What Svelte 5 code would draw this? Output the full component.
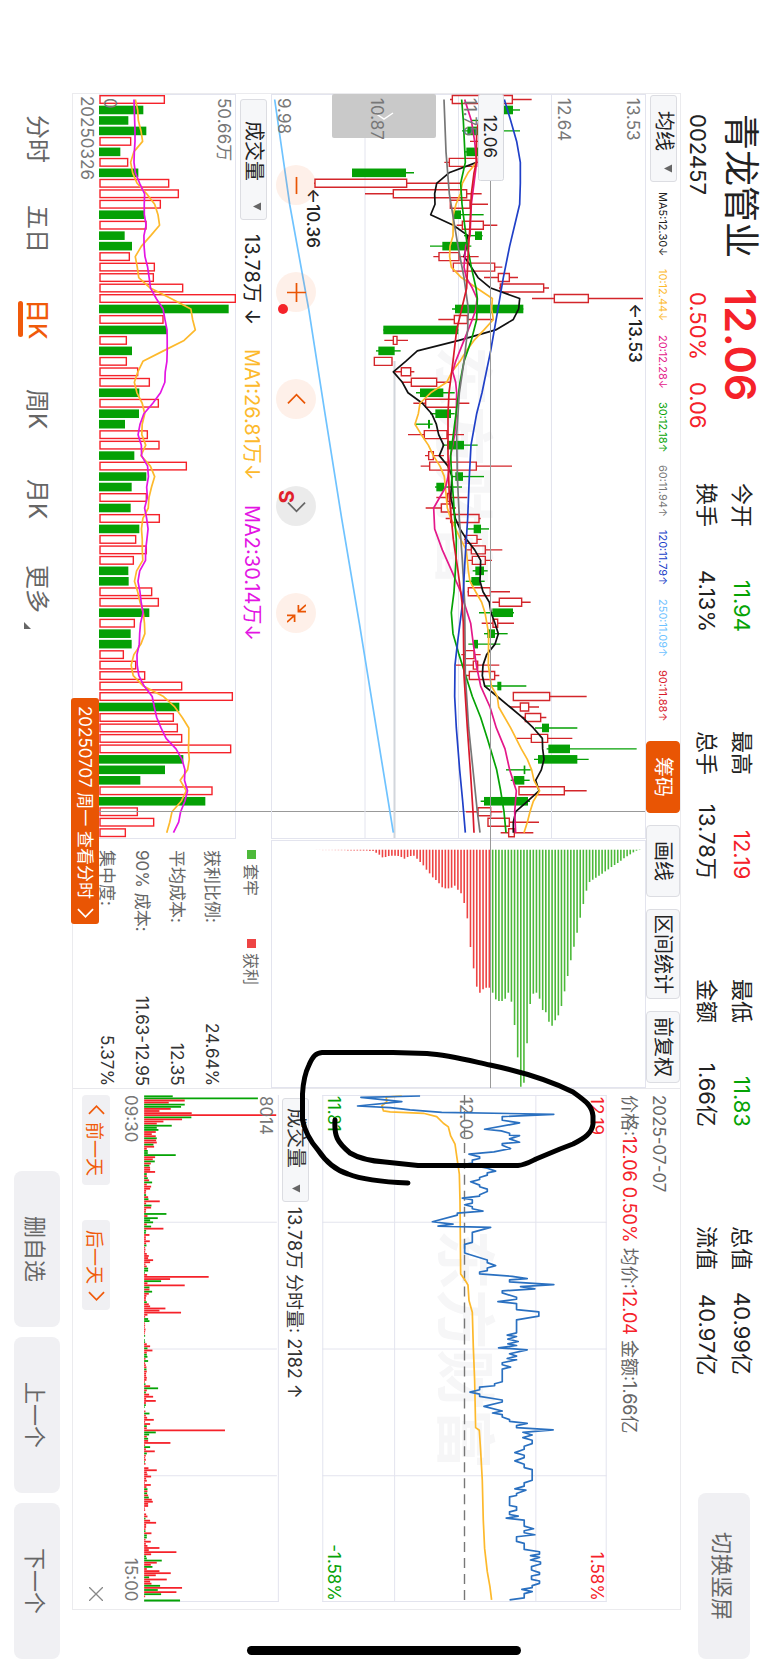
<script lang="ts">
  // Landscape K-line screen. The whole page runs in vertical-rl, so the inline axis
  // goes top to bottom and the block axis goes right to left.

  type Candle = [low: number, from: number, to: number, high: number, up: 0 | 1];
  type Point = [number, number];

  const STEP = 10.474;
  const slot = (i: number) => 5.5 + i * STEP;
  // plot units are thirds of a pixel
  const kx = (v: number) => 113 + v / 3;

  const candles: Candle[] = [
    [198, 205, 385, 443, 1], [320, 335, 387, 408, 0], [264, 282, 300, 320, 0], [234, 250, 300, 408, 0],
    [258, 285, 320, 340, 1], [240, 247, 282, 300, 0], [181, 196, 278, 300, 1], [-96, -96, 66, 90, 0],
    [-210, -207, 68, 230, 1], [-57, 28, 248, 293, 1], [199, 199, 258, 312, 1], [205, 209, 231, 299, 0],
    [218, 235, 298, 340, 1], [240, 273, 294, 296, 0], [138, 175, 248, 262, 0], [148, 165, 225, 284, 1],
    [208, 208, 332, 355, 1], [300, 343, 376, 402, 1], [345, 349, 479, 495, 1], [444, 511, 613, 777, 1],
    [204, 213, 418, 418, 0], [163, 211, 250, 330, 1], [-2, -2, 223, 223, 0], [1, 28, 39, 72, 1],
    [-24, -17, 32, 50, 0], [-29, -29, 24, 24, 1], [33, 52, 80, 91, 1], [53, 82, 158, 198, 1],
    [96, 108, 178, 212, 0], [88, 125, 218, 256, 1], [138, 154, 201, 212, 0], [93, 132, 138, 146, 0],
    [72, 121, 189, 240, 1], [175, 189, 240, 281, 0], [123, 134, 148, 180, 1], [110, 137, 277, 384, 1],
    [205, 214, 237, 300, 0], [153, 157, 180, 234, 0], [157, 190, 200, 250, 1], [125, 172, 200, 216, 1],
    [185, 200, 285, 290, 1], [250, 269, 291, 315, 0], [240, 244, 279, 293, 1], [244, 262, 304, 355, 1],
    [252, 265, 304, 324, 1], [266, 274, 300, 311, 0], [245, 262, 288, 302, 0], [250, 253, 319, 378, 1],
    [325, 346, 413, 440, 1], [285, 325, 387, 390, 0], [293, 327, 341, 390, 1], [300, 310, 333, 371, 0],
    [253, 269, 282, 349, 0], [232, 244, 270, 290, 1], [216, 268, 281, 346, 1], [246, 256, 332, 346, 1],
    [300, 340, 352, 427, 0], [388, 388, 497, 608, 1], [377, 409, 434, 465, 1], [413, 424, 470, 487, 1],
    [453, 474, 495, 580, 0], [397, 442, 491, 565, 1], [488, 493, 558, 758, 0], [450, 462, 580, 614, 0],
    [366, 419, 424, 440, 0], [380, 389, 421, 437, 0], [403, 405, 541, 608, 1], [290, 300, 432, 438, 0],
    [246, 282, 320, 355, 1], [312, 312, 376, 465, 1], [350, 374, 391, 448, 1],
  ];

  const averages: { color: string; points: Point[] }[] = [
    { color: '#6fc3ff', points: [[0, -328], [10, -283], [20, -226], [30, -177], [40, -127], [50, -74], [61, -18], [70, 28]] },
    { color: '#111', points: [[6, 278], [7, 195], [8, 158], [9, 152], [10, 153], [11, 140], [12, 208], [13, 252], [14, 248], [15, 240], [16, 262], [17, 282], [18, 320], [19, 407], [20, 404], [21, 388], [22, 335], [23, 225], [24, 100], [25, 65], [26, 28], [27, 55], [28, 72], [29, 115], [30, 143], [31, 157], [32, 164], [33, 179], [34, 166], [35, 192], [36, 204], [38, 200], [39, 208], [40, 214], [41, 228], [42, 248], [43, 272], [44, 290], [46, 288], [47, 297], [48, 316], [49, 321], [50, 333], [51, 343], [52, 333], [53, 308], [54, 297], [55, 295], [56, 302], [57, 340], [58, 378], [59, 415], [60, 448], [61, 475], [62, 476], [63, 480], [64, 472], [65, 455], [66, 465], [67, 430], [68, 395], [69, 388], [70, 388]] },
    { color: '#fdb92c', points: [[6, 278], [7, 252], [8, 235], [9, 229], [10, 216], [11, 208], [13, 207], [14, 198], [15, 197], [16, 202], [17, 232], [18, 278], [19, 325], [20, 323], [21, 328], [22, 300], [23, 270], [24, 247], [25, 228], [26, 204], [27, 188], [28, 140], [29, 108], [30, 103], [31, 93], [32, 112], [33, 133], [34, 148], [35, 168], [36, 181], [37, 184], [39, 190], [40, 200], [41, 215], [42, 230], [43, 247], [45, 253], [46, 258], [47, 275], [48, 293], [49, 303], [51, 314], [54, 313], [56, 322], [57, 340], [58, 344], [60, 380], [61, 396], [62, 412], [63, 430], [64, 443], [65, 450], [66, 467], [67, 448], [68, 438], [69, 430], [70, 420]] },
    { color: '#e4188a', points: [[0, 242], [2, 262], [4, 272], [6, 278], [8, 270], [10, 262], [13, 258], [14, 245], [16, 240], [17, 247], [18, 265], [19, 279], [20, 276], [21, 265], [23, 240], [25, 215], [26, 206], [27, 215], [28, 218], [30, 217], [32, 212], [34, 200], [36, 192], [37, 185], [38, 167], [39, 149], [41, 152], [43, 175], [45, 203], [47, 230], [48, 240], [50, 260], [52, 268], [54, 277], [56, 290], [58, 318], [60, 337], [62, 363], [64, 377], [66, 397], [68, 392], [70, 395]] },
    { color: '#05a305', points: [[0, 233], [2, 238], [6, 244], [8, 230], [10, 234], [12, 242], [14, 250], [16, 262], [18, 276], [19, 280], [21, 278], [23, 262], [25, 240], [27, 228], [30, 216], [32, 208], [34, 200], [36, 203], [38, 208], [40, 212], [42, 217], [44, 216], [47, 210], [49, 202], [51, 207], [53, 225], [55, 245], [57, 265], [59, 290], [61, 310], [64, 338], [66, 350], [68, 360], [70, 366]] },
    { color: '#777', points: [[0, 180], [5, 186], [9, 196], [14, 222], [17, 240], [20, 253], [22, 251], [25, 240], [28, 226], [32, 218], [36, 220], [40, 226], [44, 235], [48, 242], [55, 244], [60, 254], [64, 267], [68, 280], [70, 288]] },
    { color: '#2040c8', points: [[0, 361], [2, 380], [4, 398], [6, 409], [8, 409], [10, 407], [12, 392], [14, 377], [17, 358], [20, 342], [24, 320], [28, 294], [30, 278], [33, 261], [36, 256], [40, 251], [44, 243], [48, 236], [52, 220], [54, 213], [57, 212], [60, 217], [64, 227], [67, 236], [70, 244]] },
    { color: '#d8192b', points: [[0, 300], [3, 278], [6, 277], [7, 270], [9, 262], [12, 258], [15, 252], [18, 248], [22, 218], [25, 207], [28, 195], [30, 192], [34, 192], [38, 196], [42, 208], [45, 222], [48, 234], [50, 238], [55, 240], [60, 250], [64, 259], [68, 267], [70, 270]] },
  ];

  // daily volume, negative = falling day
  const volumes = [
    196, -133, -88, -142, 95, -64, 86, -118, 209, 238, 184, -136, 141, -77, -99, 91, 166, 163, 251, 409, -389, 192,
    -204, 82, -99, 82, 116, 151, -121, 178, -120, -78, 145, 180, -106, 262, -142, -98, 142, -95, 181, -121, 110, 142,
    103, -88, -89, 158, 178, -151, 106, -95, -98, 73, 110, 137, 248, 400, -241, 223, 235, 248, 395, -253, -198, -124,
    339, -319, 115, 164, 79,
  ];

  function movingAverage(size: number, lead: number[]) {
    return volumes.map((_, i) => {
      if (i < lead.length) return lead[i];
      const part = volumes.slice(i - size + 1, i + 1);
      return part.reduce((sum, v) => sum + Math.abs(v), 0) / size;
    });
  }
  const volumeLine = (values: number[]) => values.map((v, i) => `${v / 3},${slot(i)}`).join(' ');
  const ma5 = volumeLine(movingAverage(5, [109, 116, 118, 126]));
  const ma10 = volumeLine(movingAverage(10, [105, 106, 107, 108, 108, 106, 105, 109, 122]));

  const chipsLoss = [
    818, 838, 843, 843, 836, 818, 845, 915, 1012, 1100, 1088, 970, 852, 821, 818, 836, 870, 877, 905, 917, 901, 886,
    858, 814, 768, 721, 680, 638, 593, 552, 512, 486, 479, 473, 467, 461, 454, 448, 441, 435, 429, 422, 415, 409, 403,
    397, 392, 390,
  ];
  const chipsGain = [
    803, 803, 808, 818, 800, 745, 681, 595, 549, 520, 509, 497, 503, 505, 505, 502, 490, 480, 472, 460, 449, 436, 426,
    416, 407, 408, 411, 416, 411, 408, 407, 407, 408, 411, 412, 404, 398, 393, 393, 392, 392, 392, 392, 392, 392, 392,
    391, 391, 391, 391, 391, 391, 391, 391, 390, 390,
  ];

  const priceLine =
    '108,45 -70,49 53,62 -80,75 18,80 78,87 173,94 510,100 355,107 355,118 407,126 302,145 352,150 377,157 377,163 407,164 377,174 407,184 355,188 355,193 380,203 330,213 255,220 287,228 287,233 265,238 265,247 245,250 310,262 335,271 310,276 310,283 287,290 287,296 260,303 287,313 287,318 310,325 310,332 287,342 287,346 235,352 265,357 265,367 242,372 265,378 265,384 297,391 220,397 220,403 145,423 207,430 162,436 320,440 265,455 265,485 242,491 242,517 310,538 310,546 335,555 310,562 310,570 287,574 287,580 385,587 430,594 377,598 377,604 510,612 410,618 453,625 355,631 355,637 398,650 398,656 342,663 398,669 398,687 465,694 465,707 398,718 398,757 370,764 398,768 372,776 403,783 372,790 398,795 344,802 430,808 377,820 398,827 370,834 398,838 355,847 355,853 380,860 355,866 355,904 332,910 332,916 287,920 287,928 258,935 287,941 287,948 355,959 355,965 300,978 355,992 326,998 355,1003 355,1010 377,1018 377,1023 430,1029 398,1036 398,1042 508,1049 417,1056 445,1064 417,1072 445,1080 445,1090 421,1098 421,1107 393,1117 421,1125 421,1132 393,1142 421,1152 421,1162 445,1168 445,1200 421,1208 421,1218 393,1226 426,1230 398,1240 398,1246 377,1250 377,1276 398,1280 398,1290 377,1295 377,1303 403,1308 367,1314 421,1320 421,1338 449,1346 421,1352 421,1358 453,1364 398,1370 398,1384 421,1390 421,1408 467,1415 467,1422 440,1427 467,1432 440,1440 470,1446 470,1452 443,1460 443,1470 467,1478 467,1483 443,1488 443,1498 467,1503 467,1510 445,1517 445,1523 414,1528 445,1535 421,1541 421,1554 377,1560';
  const meanLine =
    '53,45 6,48 8,62 -7,75 -2,90 18,93 118,97 158,107 178,127 193,138 200,165 213,190 218,225 226,280 228,360 230,580 243,598 252,613 255,660 265,695 268,800 272,900 275,1042 286,1050 290,1110 295,1200 298,1320 302,1405 310,1475 318,1520 323,1560';

  // minute volume, negative = falling minute
  const minutes = [
    -86, -342, 122, 74, -122, -111, 80, 46, 143, 397, -142, 114, 58, 38, -83, -38, -43, 35, 23, 35, -38, 36, 38, -28,
    30, 8, -11, -11, -95, 33, 26, -32, 20, -16, 18, 18, 33, -8, 8, -11, 15, -24, 8, 21, 18, 6, 5, -6, 12, -13, 47, 6,
    -22, 21, 6, 5, -67, 10, -41, -18, -27, 8, -21, 58, -6, -5, 16, 5, 5, 17, 6, -7, 3, 4, 3, 8, 14, 12, 27, 18, 4, 8,
    -12, -12, -2, 9, 194, 78, -51, 10, 122, -16, 16, -24, 14, 7, 5, 5, -8, 14, 18, 64, 46, 111, 10, 3, -12, -16, 2, 3,
    2, 4, 3, 2, -3, 0, -2, -3, 8, 18, -10, 25, 8, -8, -10, 4, -12, 3, 5, 7, -7, 8, 6, 6, 8, 7, 2, -4, 18, -42, 8, -5,
    15, 27, 6, 35, 5, -5, -2, 0, 4, -16, 5, 9, 29, 3, 18, -8, 8, 243, -35, -15, 8, -12, 12, 79, 3, -18, 5, 32, -8, 5,
    3, 5, -2, 4, 0, 13, 38, 8, 10, 21, 6, 8, 2, 20, 7, -10, 10, -9, 12, -14, 23, 26, 12, 12, 2, 3, 0, 6, 10, -4, 18,
    36, 6, 6, 4, -4, 22, -8, -8, 4, 20, 5, 10, 46, 14, 97, 21, -6, -8, -53, 38, 20, -25, 8, 46, 80, 35, -15, 68, 18,
    22, -48, 114, -41, 97, -51, 3, 0, -108,
  ];

  const stats = [
    [['今开', '11.94', 'down'], ['换手', '4.13%', '']],
    [['最高', '12.19', 'up'], ['总手', '13.78万', '']],
    [['最低', '11.83', 'down'], ['金额', '1.66亿', '']],
    [['总值', '40.99亿', ''], ['流值', '40.97亿', '']],
  ];
  const maLegend = [
    ['MA5:12.30↓', '#222'], ['10:12.44↓', '#fdb92c'], ['20:12.28↓', '#e4188a'], ['30:12.18↑', '#05a305'],
    ['60:11.94↑', '#777'], ['120:11.79↑', '#2040c8'], ['250:11.09↑', '#6fc3ff'], ['90:11.88↑', '#d8192b'],
  ];
  const chipRows = [['获利比例:', '24.64%'], ['平均成本:', '12.35'], ['90% 成本:', '11.63-12.95'], ['集中度:', '5.37%']];
  const periods = ['分时', '五日', '日K', '周K', '月K', '更多'];

  let period = $state('日K');
  let panel = $state('筹码');
</script>

{#snippet label(x: number, y: number, text: string, kind = '')}
  <text class={kind} transform="translate({x} {y}) rotate(90)">{text}</text>
{/snippet}

{#snippet picker(name: string, value: string)}
  <label class="picker">
    <select aria-label={name}><option>{value}</option></select>
    <svg viewBox="0 0 8 8" aria-hidden="true"><path d="M0 4 8 0V8Z" /></svg>
  </label>
{/snippet}

<div class="screen">
  <header>
    <div class="quote">
      <h1>青龙管业</h1>
      <strong>12.06</strong>
      <span class="code">002457</span>
      <span class="change"><span>0.50%</span><span>0.06</span></span>
    </div>
    <div class="stats">
      {#each stats as pair}
        <dl>
          {#each pair as [name, value, kind]}
            <div><dt>{name}</dt><dd class={kind}>{value}</dd></div>
          {/each}
        </dl>
      {/each}
    </div>
    <button class="soft rotate" type="button">切换竖屏</button>
  </header>

  <main>
    <div class="toolbar">
      {@render picker('指标', '均线')}
      <div class="legend">
        {#each maLegend as [text, color]}<span style="color: {color}">{text}</span>{/each}
      </div>
      {#each ['筹码', '画线', '区间统计', '前复权'] as name}
        <button type="button" class="tool" class:active={panel === name} onclick={() => (panel = name)}>{name}</button>
      {/each}
    </div>

    <section class="kline">
      <svg viewBox="0 0 375 746" role="img" aria-label="日K线图">
        {@render label(170, 252, '东方财富', 'watermark')}
        <path class="grid" d="M94 0V744M187.5 0V744M280.5 0V744M0 .5H375M0 744.5H375M.5 0V744M374.5 0V744" />
        <path class="thick" d="M123.5 267V744" />
        <rect class="handle" x="61" y="0" width="104" height="44" rx="2" />
        <path class="chevron" d="M104 19 113 25 122 19" />
        {#each candles as [low, from, to, high, up], i}
          {#if up}
            <path class="rise" d="M{kx(low)} {slot(i)}H{kx(from)}M{kx(to)} {slot(i)}H{kx(high)}M{kx(from)} {slot(i) - 4}H{kx(to)}V{slot(i) + 4}H{kx(from)}Z" />
          {:else}
            <path class="fall" d="M{kx(low)} {slot(i)}H{kx(high)}" />
            <rect class="fall-body" x={kx(from)} y={slot(i) - 4.3} width={(to - from) / 3} height="8.6" />
          {/if}
        {/each}
        {#each averages as line}
          <polyline class="line" stroke={line.color} points={line.points.map(([i, v]) => `${kx(v)},${slot(i)}`).join(' ')} />
        {/each}
        <path class="cross" d="M219.5 0V746" />
        {@render label(356, 4, '13.53')}
        {@render label(287, 4, '12.64')}
        {@render label(193, 4, '11.75')}
        {@render label(100, 4, '10.87')}
        {@render label(7, 4, '9.98')}
        {@render label(358, 209, '←13.53', 'dark')}
        {@render label(36, 94, '←10.36', 'dark')}
        <rect class="tag" x="207.5" y=".5" width="25" height="86" rx="2" />
        {@render label(213, 21, '12.06', 'dark plain')}
        <circle cx="12" cy="215" r="5" fill="#f5222a" />
      </svg>
      <div class="controls">
        <button type="button" aria-label="缩小"><svg viewBox="0 0 20 20"><path d="M10 1V19" /></svg></button>
        <button type="button" aria-label="放大"><svg viewBox="0 0 20 20"><path d="M10 0V20M0 10H20" /></svg></button>
        <button type="button" aria-label="左移"><svg viewBox="0 0 20 20"><path d="M1 14 10 5 19 14" /></svg></button>
        <button type="button" aria-label="右移" class="off"><svg viewBox="0 0 20 20"><path d="M1 6 10 15 19 6" /></svg><b>S</b></button>
        <button type="button" aria-label="还原"><svg viewBox="0 0 20 20"><path d="M20 1 12 8M12 1V8H20M0 19 8 12M8 19V12H0" /></svg></button>
      </div>
    </section>

    <section class="chips">
      <svg viewBox="0 0 375 248" role="img" aria-label="筹码分布">
        <path class="grid" d="M0 .5H375M0 247.5H375M.5 0V248M374.5 0V248" />
        {#each chipsLoss as end, i}
          <path class="loss" d="M{kx(326 + i * 9.38)} 9.7V{9.7 + (end - 389) / 3}" />
        {/each}
        {#each chipsGain as end, i}
          <path class="gain" opacity={i > 36 ? 1 - (i - 36) / 22 : 1} d="M{kx(316 - i * 9.43)} 9.7V{9.7 + (end - 389) / 3}" />
        {/each}
        <path class="cross" d="M219.5 0V248" />
      </svg>
    </section>

    <div class="volume-head">
      {@render picker('副图', '成交量')}
      <span>13.78万 ↓</span>
      <span class="ma-a">MA1:26.81万↓</span>
      <span class="ma-b">MA2:30.14万↓</span>
    </div>

    <section class="volume">
      <svg viewBox="0 0 137 746" role="img" aria-label="成交量">
        <path class="grid" d="M0 .5H137M0 744.5H137M136.5 0V744" />
        {#each volumes as v, i}
          {#if v > 0}
            <rect class="bar-up" x="1" y={slot(i) - 3.8} width={v / 3 - 1} height="7.6" />
          {:else}
            <rect class="fall-body" x="0" y={slot(i) - 4.3} width={-v / 3} height="8.6" />
          {/if}
        {/each}
        <polyline class="line" stroke="#fdb92c" points={ma5} />
        <polyline class="line" stroke="#e315e3" points={ma10} />
        {@render label(5, 4, '0')}
        {@render label(119, 4, '50.66万')}
      </svg>
    </section>

    <div class="dates">
      <span>20250326</span>
      <button type="button">20250707 周一 查看分时 <svg viewBox="0 0 18 10"><path d="M1 1 9 9 17 1" /></svg></button>
    </div>
    <div class="crosshair"></div>

    <section class="chip-info">
      <div class="keys"><span><i class="k-loss"></i>套牢</span><span><i class="k-gain"></i>获利</span></div>
      <dl>
        {#each chipRows as [name, value]}
          <div><dt>{name}</dt><dd>{value}</dd></div>
        {/each}
      </dl>
    </section>

    <section class="intraday">
      <time datetime="2025-07-07">2025-07-07</time>
      <p>价格:<em>12.06</em> <em>0.50%</em> 均价:<em>12.04</em> 金额:1.66亿</p>
      <svg class="price" viewBox="0 0 285 508" role="img" aria-label="分时走势">
        {@render label(121, 135, '东方财富', 'watermark')}
        <path class="grid" d="M72.5 0V508M214 0V508M0 127.5H285M0 254.5H285M0 381.5H285M.5 0V508M284.5 0V508M0 .5H285M0 507.5H285" />
        <path class="base" d="M142.5 0V508" />
        {@render label(138, 2, '12.00')}
        {@render label(269, 2, '12.19', 'up')}
        {@render label(269, 507, '1.58%', 'up end')}
        {@render label(6, 1, '11.81', 'down')}
        {@render label(6, 507, '-1.58%', 'down end')}
        <g transform="translate(62 -14) scale(.3333)">
          <polyline class="line" stroke="#fdb92c" points={meanLine} />
          <polyline class="line" stroke="#2a70c0" points={priceLine} />
        </g>
      </svg>
      <div class="minute-head">
        {@render picker('分时副图', '成交量')}
        <span>13.78万 分时量: 2182 ↑</span>
      </div>
      <svg class="minute" viewBox="0 0 135 508" role="img" aria-label="分时成交量">
        <path class="grid" d="M0 127.5H133M0 254.5H133M0 381.5H133M134.5 0V508M0 507.5H135" />
        {#each minutes as v, i}
          <path class={v > 0 ? 'm-up' : 'm-down'} d="M0 {1.3 + i * 2.105}H{Math.abs(v) / 3}" />
        {/each}
        {@render label(116, 1, '8014')}
      </svg>
      <div class="times"><span>09:30</span><span>15:00</span></div>
      <div class="days">
        <button type="button"><svg viewBox="0 0 18 10"><path d="M1 9 9 1 17 9" /></svg>前一天</button>
        <button type="button">后一天<svg viewBox="0 0 18 10"><path d="M1 1 9 9 17 1" /></svg></button>
        <button type="button" class="close" aria-label="关闭"><svg viewBox="0 0 14 14"><path d="M0 0 14 14M14 0 0 14" /></svg></button>
      </div>
    </section>

    <svg class="ink" viewBox="0 0 607 1515" aria-hidden="true">
      <path d="M262 1026C261 1042 264 1048 277 1059C287 1065 297 1067 312 1068L345 1071.500H445C452 1071 457 1068 463 1065L487 1055 500 1050C512 1044 519 1039 520 1030V1022C519 1012 514 1008 500 998C480 988 450 978 417 971C390 965 375 961 354 959.500L320 958.500H249C243 959 240 962 236 971C231 981 230 990 229.500 1000V1026C232 1038 238 1048 245 1056C253 1068 262 1076 275 1080C290 1086 310 1088 335 1089" />
    </svg>
  </main>

  <footer>
    <nav>
      {#each periods as name}
        <button type="button" class:current={period === name} class:more={name === '更多'} onclick={() => (period = name)}><span>{name}</span></button>
      {/each}
    </nav>
    <button class="soft" type="button">删自选</button>
    <button class="soft" type="button">上一个</button>
    <button class="soft" type="button">下一个</button>
  </footer>
  <div class="home"></div>
</div>

<style>
  :global(body) { margin: 0; background: #fff; }
  .screen {
    position: relative; display: flex; flex-direction: column;
    width: 100%; height: 100vh; overflow: hidden; background: #fff;
    writing-mode: vertical-rl; text-orientation: sideways;
    font-family: Inter, "Noto Sans CJK SC", sans-serif; font-size: 17px; color: #222;
  }
  .screen * { box-sizing: border-box; }
  svg { display: block; writing-mode: horizontal-tb; fill: none; }
  button, select {
    appearance: none; margin: 0; padding: 0; border: 0; background: none;
    font: inherit; color: inherit; writing-mode: vertical-rl; text-orientation: sideways; cursor: pointer;
  }
  dl, dd, h1, p { margin: 0; }
  .up, em { color: #f5222a; fill: #f5222a; font-style: normal; }
  .down { color: #05a305; fill: #05a305; }

  header {
    display: flex; flex: none; block-size: 88px;
    padding-inline: 114px 10px;
  }
  .quote {
    display: grid; grid-template-columns: 170px auto; grid-template-rows: 54px 32px;
    flex: 0 0 369px; justify-content: start;
  }
  h1 { font-size: 36px; font-weight: 400; line-height: 54px; }
  strong { padding-inline-start: 4px; font-size: 43px; font-weight: 600; line-height: 54px; color: #f5222a; }
  .code, .change { font-size: 22px; line-height: 32px; }
  .change { display: flex; gap: 22px; padding-inline-start: 8px; color: #f5222a; }
  .stats {
    display: grid; grid-template-columns: repeat(4, 1fr); column-gap: 99px; flex: 1;
    padding-block-start: 9px; margin-inline-end: 118px; font-size: 22px; line-height: 35px;
  }
  .stats dl div, .chip-info dl div { display: flex; justify-content: space-between; white-space: nowrap; }
  .soft { border-radius: 8px; background: #f0f0f3; color: #666; font-size: 22px; }
  .rotate { inline-size: 166px; block-size: 52px; margin-block-start: 18px; }

  main {
    position: relative; flex: 1; display: grid; min-block-size: 0;
    grid-template-columns: 746fr 248fr 521fr; grid-template-rows: 34px 375fr 35px 137fr 26px;
    margin-inline: 94px 60px; outline: 1px solid #ebebee;
  }
  main > * { min-inline-size: 0; min-block-size: 0; }
  .toolbar { grid-area: 1 / 1 / 2 / 3; display: flex; align-items: center; padding-inline: 1px 5px; }
  .legend { display: flex; flex: 1; gap: 13px; padding-inline-start: 10px; font-size: 11px; white-space: nowrap; }
  .tool {
    block-size: 34px; padding-inline: 15px; margin-inline-start: 12px; white-space: nowrap;
    border: 1px solid #dcdde2; border-radius: 4px; background: #f6f7f9; font-size: 20px; line-height: 32px;
  }
  .tool:nth-of-type(3) { padding-inline: 4px; }
  .tool:nth-of-type(4) { padding-inline: 5px; }
  .tool.active { border-color: #e95504; background: #e95504; color: #fff; }

  .picker { position: relative; display: block; block-size: 27px; }
  .picker select {
    block-size: 27px; padding-inline: 15px 30px; border: 1px solid #dcdde2; border-radius: 3px;
    background: #f6f7f9; font-size: 20px; line-height: 25px;
  }
  .picker svg { position: absolute; inset-block-end: 9px; inset-inline-end: 5px; width: 8px; height: 9px; fill: #666; }

  .kline { grid-area: 2 / 1; position: relative; }
  .chips { grid-area: 2 / 2; }
  .volume { grid-area: 4 / 1; }
  .kline > svg, .chips svg, .volume svg { width: 100%; height: 100%; }
  text { font-size: 17px; fill: #777; }
  text.up { fill: #f5222a; }
  text.down { fill: #05a305; }
  .dark { fill: #222; font-weight: 500; }
  .plain { font-weight: 400; }
  .end { text-anchor: end; }
  .watermark { font-size: 60px; font-weight: 700; fill: #f6f6f7; }
  .grid { stroke: #e3e4ee; stroke-width: 1; }
  .thick { stroke: #d2d6dc; stroke-width: 2; }
  .handle { fill: #c9c9c9; }
  .chevron { stroke: #fff; stroke-width: 1.5; }
  .rise { stroke: #d3262b; stroke-width: 1.4; fill: none; }
  .fall { stroke: #05a005; stroke-width: 1.4; }
  .fall-body { fill: #05a005; }
  .bar-up { stroke: #f5222a; stroke-width: 1.4; }
  .line { stroke-width: 1.7; vector-effect: non-scaling-stroke; stroke-linejoin: round; }
  .cross { stroke: #999; stroke-width: 1; }
  .tag { fill: #f6f7f9; stroke: #d6d8de; }
  .loss { stroke: #4db93a; stroke-width: 1.6; }
  .gain { stroke: #ee4444; stroke-width: 1.6; }

  .controls { position: absolute; inset-block-end: 5px; inset-inline-start: 71px; display: flex; gap: 67px; }
  .controls button {
    position: relative; display: flex; align-items: center; justify-content: center;
    inline-size: 40px; block-size: 40px; border-radius: 50%; background: rgba(240, 90, 10, .09);
  }
  .controls svg { width: 19px; height: 19px; stroke: #e95504; stroke-width: 1.8; }
  .controls .off { background: rgba(0, 0, 0, .08); }
  .controls .off svg { stroke: #666; }
  .off b { position: absolute; inset-block-end: 0; inset-inline-start: 4px; font-size: 20px; line-height: 20px; color: #e0202a; }

  .volume-head { grid-area: 3 / 1; display: flex; align-items: center; padding-inline-start: 5px; font-size: 20px; white-space: nowrap; }
  .volume-head select { padding-inline: 21px 38px; }
  .volume-head .picker svg { inset-inline-end: 6px; }
  .volume-head > span { margin-inline-start: 14px; }
  .volume-head > .ma-a, .volume-head > .ma-b { margin-inline-start: 24px; }
  .ma-a { color: #fdb92c; }
  .ma-b { color: #e315e3; }

  .dates { grid-area: 5 / 1 / 6 / 3; position: relative; padding-inline-start: 2px; line-height: 24px; color: #777; }
  .dates button {
    position: absolute; inset-block-start: 0; inset-inline-start: 604px; z-index: 2;
    display: flex; align-items: center; gap: 9px; block-size: 28px; padding-inline: 8px 6px;
    border-radius: 3px; background: #e95504; color: #fff; white-space: nowrap;
  }
  .dates svg { width: 17px; height: 10px; stroke: #fff; stroke-width: 1.8; }
  .crosshair { grid-area: 2 / 1 / 5 / 2; margin-inline-start: 717px; inline-size: 1px; background: #999; }

  .chip-info { grid-area: 3 / 2 / 6 / 3; padding-inline: 10px 2px; color: #666; }
  .keys { display: flex; gap: 43px; font-size: 16px; line-height: 40px; margin-block-end: 2px; }
  .keys span { display: flex; align-items: center; gap: 5px; }
  .keys i { inline-size: 9px; block-size: 9px; }
  .k-loss { background: #4db93a; }
  .k-gain { background: #ee4444; }
  .chip-info dl { line-height: 35px; }
  .chip-info dd { color: #333; }

  .intraday {
    grid-area: 1 / 3 / 6 / 4; display: flex; flex-direction: column;
    padding-block: 6px 9px; padding-inline: 6px 7px; border-inline-start: 1px solid #e8e8ec; color: #666;
  }
  .intraday time { line-height: 31px; }
  .intraday p { margin-block-end: 8px; font-size: 18px; line-height: 28px; white-space: nowrap; }
  .price { width: 285px; height: 100%; }
  .minute { width: 135px; height: 100%; }
  .base { stroke: #777; stroke-width: 1.4; stroke-dasharray: 10 6; }
  .m-up { stroke: #f5222a; stroke-width: 1.8; }
  .m-down { stroke: #05a305; stroke-width: 1.8; }
  .minute-head {
    display: flex; align-items: center; gap: 5px; padding-block: 13px 3px; padding-inline-start: 3px;
    font-size: 18px; color: #333; white-space: nowrap;
  }
  .minute-head select { padding-inline: 9px 33px; }
  .minute-head .picker svg { inset-inline-end: 9px; }
  .times { display: flex; justify-content: space-between; line-height: 27px; color: #777; }
  .days { display: flex; gap: 35px; margin-block-start: 7px; }
  .days button {
    display: flex; align-items: center; justify-content: center; gap: 7px;
    inline-size: 90px; block-size: 28px; border-radius: 4px; background: #f0f0f3; color: #f05a0a; font-size: 18px; white-space: nowrap;
  }
  .days svg { width: 17px; height: 10px; stroke: #f05a0a; stroke-width: 1.8; }
  .days .close { inline-size: 16px; margin-inline-start: auto; background: none; }
  .days .close svg { width: 14px; height: 14px; stroke: #888; stroke-width: 1.3; }
  .ink { position: absolute; inset: 0; width: 100%; height: 100%; pointer-events: none; }
  .ink path { stroke: #000; stroke-width: 5; stroke-linecap: round; stroke-linejoin: round; }

  footer { display: flex; flex: none; gap: 10px; block-size: 73px; padding-block: 13px 14px; padding-inline: 94px 10px; }
  nav { display: flex; flex: 1; }
  nav button { position: relative; inline-size: 90px; font-size: 24px; line-height: 46px; color: #666; }
  nav .current { color: #f05a0a; font-weight: 500; }
  .current::after {
    content: ''; position: absolute; inset-block-end: 4px; inset-inline: 27px;
    block-size: 5px; border-radius: 3px; background: #f05a0a;
  }
  .more::after {
    content: ''; position: absolute; inset-block-end: 10px; inset-inline-end: 5px;
    width: 7px; height: 7px; background: #666; clip-path: polygon(0 0, 100% 100%, 0 100%);
  }
  footer .soft { inline-size: 156px; }
  .home {
    position: absolute; left: 0; right: 0; bottom: 14px; width: 274px; height: 9px;
    margin: 0 auto; border-radius: 5px; background: #000;
  }
</style>
